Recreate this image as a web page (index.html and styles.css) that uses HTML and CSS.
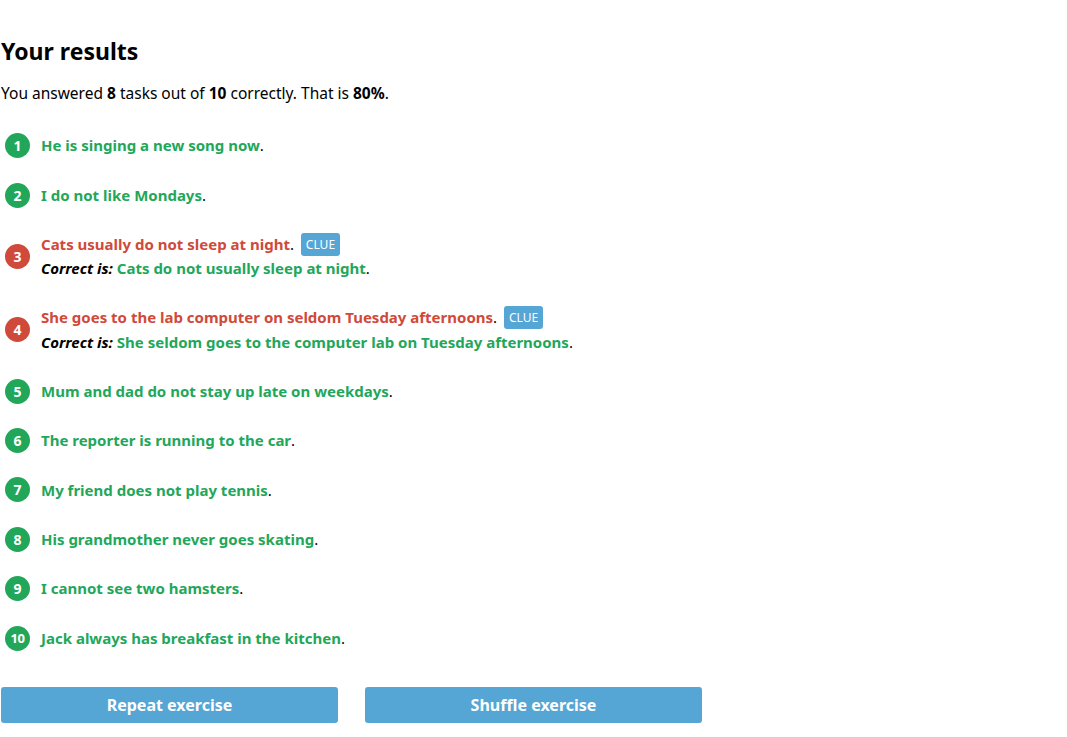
FILE: index.html
```html
<!DOCTYPE html>
<html lang="en">
<head>
<meta charset="utf-8">
<title>Your results</title>
<link rel="stylesheet" href="styles.css">
</head>
<body>
<main class="results">
  <h2 class="title">Your results</h2>
  <p class="summary">You answered <b>8</b> tasks out of <b>10</b> correctly. That is <b>80%</b>.</p>
  <ol class="tasks">
    <li class="task"><span class="num ok">1</span><div class="body"><div class="line"><span class="ans ok">He is singing a new song now</span>.</div></div></li>
    <li class="task"><span class="num ok">2</span><div class="body"><div class="line"><span class="ans ok">I do not like Mondays</span>.</div></div></li>
    <li class="task"><span class="num bad">3</span><div class="body"><div class="line"><span class="ans bad">Cats usually do not sleep at night</span>. <span class="clue">CLUE</span></div><div class="line"><i class="lbl">Correct is:</i> <span class="ans ok">Cats do not usually sleep at night</span>.</div></div></li>
    <li class="task"><span class="num bad">4</span><div class="body"><div class="line"><span class="ans bad">She goes to the lab computer on seldom Tuesday afternoons</span>. <span class="clue">CLUE</span></div><div class="line"><i class="lbl">Correct is:</i> <span class="ans ok">She seldom goes to the computer lab on Tuesday afternoons</span>.</div></div></li>
    <li class="task"><span class="num ok">5</span><div class="body"><div class="line"><span class="ans ok">Mum and dad do not stay up late on weekdays</span>.</div></div></li>
    <li class="task"><span class="num ok">6</span><div class="body"><div class="line"><span class="ans ok">The reporter is running to the car</span>.</div></div></li>
    <li class="task"><span class="num ok">7</span><div class="body"><div class="line"><span class="ans ok">My friend does not play tennis</span>.</div></div></li>
    <li class="task"><span class="num ok">8</span><div class="body"><div class="line"><span class="ans ok">His grandmother never goes skating</span>.</div></div></li>
    <li class="task"><span class="num ok">9</span><div class="body"><div class="line"><span class="ans ok">I cannot see two hamsters</span>.</div></div></li>
    <li class="task"><span class="num ok small">10</span><div class="body"><div class="line"><span class="ans ok">Jack always has breakfast in the kitchen</span>.</div></div></li>
  </ol>
  <div class="actions">
    <button class="btn" type="button">Repeat exercise</button>
    <button class="btn" type="button">Shuffle exercise</button>
  </div>
</main>
</body>
</html>
```
FILE: styles.css
```css
html, body {
  margin: 0;
  padding: 0;
  background: #fff;
}
body {
  font-family: "Noto Sans", "Open Sans", sans-serif;
  font-size: 15px;
  color: #000;
}
.results {
  padding: 0 0 0 1px;
}
.title {
  margin: 0;
  padding-top: 36px;
  font-size: 23px;
  line-height: 30px;
  font-weight: 700;
}
.summary {
  margin: 15px 0 0;
  line-height: 24px;
  font-size: 15.5px;
}
.summary b { font-weight: 700; }
.tasks {
  list-style: none;
  margin: 16px 0 0;
  padding: 0;
}
.task {
  display: flex;
  align-items: center;
  gap: 11px;
  padding: 12.2px 0 12.2px 4px;
}
.num {
  flex: none;
  width: 25px;
  height: 25px;
  border-radius: 50%;
  color: #fff;
  font-weight: 700;
  font-size: 14px;
  display: flex;
  align-items: center;
  justify-content: center;
}
.num.small { font-size: 13px; letter-spacing: -0.5px; }
.num.ok { background: #22a75a; }
.num.bad { background: #cf4a3a; }
.line {
  height: 24.5px;
  line-height: 24.5px;
  white-space: nowrap;
}
.ans {
  font-weight: 700;
}
.ans.ok { color: #22a75a; }
.ans.bad { color: #cf4a3a; }
.lbl {
  font-weight: 700;
  font-style: italic;
}
.clue {
  display: inline-block;
  vertical-align: 1px;
  margin-left: 3px;
  background: #55a5d5;
  color: #fff;
  font-size: 12px;
  line-height: 23px;
  padding: 0 5px;
  border-radius: 3px;
}
.actions {
  display: flex;
  gap: 27px;
  margin-top: 24px;
}
.btn {
  width: 337px;
  height: 36px;
  border: 0;
  border-radius: 3px;
  background: #55a5d5;
  color: #fff;
  font-family: inherit;
  font-size: 16px;
  font-weight: 700;
  cursor: pointer;
}
```
